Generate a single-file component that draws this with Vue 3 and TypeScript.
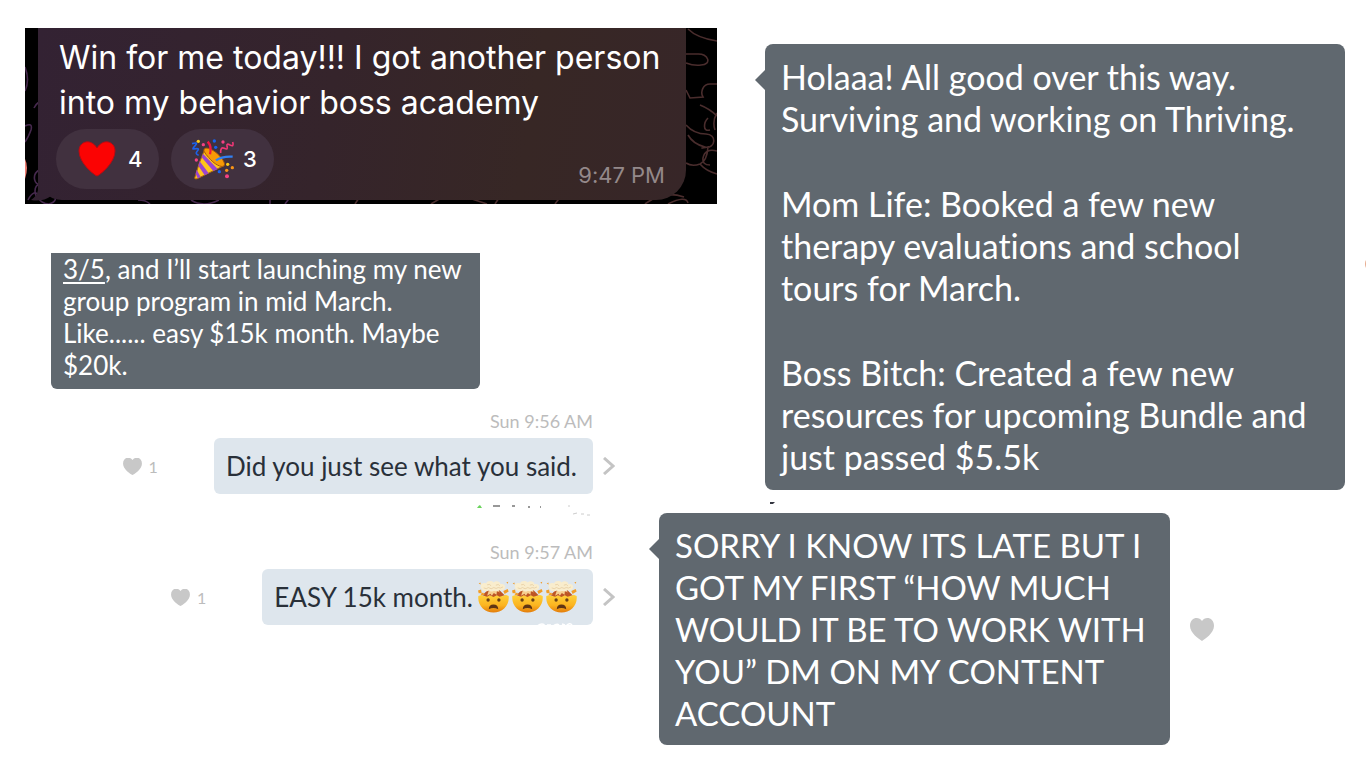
<script setup lang="ts">
interface Reply {
  id: string
  time: string
  text: string
  likes: number
  blown: number
}

const replies: Reply[] = [
  { id: 'first', time: 'Sun 9:56 AM', text: 'Did you just see what you said.', likes: 1, blown: 0 },
  { id: 'second', time: 'Sun 9:57 AM', text: 'EASY 15k month.', likes: 1, blown: 3 },
]

const updates: string[][] = [
  ['Holaaa! All good over this way.', 'Surviving and working on Thriving.'],
  ['Mom Life: Booked a few new', 'therapy evaluations and school', 'tours for March.'],
  ['Boss Bitch: Created a few new', 'resources for upcoming Bundle and', 'just passed $5.5k'],
]

const sorry: string[] = [
  'SORRY I KNOW ITS LATE BUT I',
  'GOT MY FIRST “HOW MUCH',
  'WOULD IT BE TO WORK WITH',
  'YOU” DM ON MY CONTENT',
  'ACCOUNT',
]
</script>

<template>
  <main class="board">
    <section class="win">
      <svg class="doodles" viewBox="0 0 692 176" preserveAspectRatio="none" aria-hidden="true">
        <g fill="none" stroke="#4a2d2d" stroke-width="1.6">
          <path d="M663 1q9 9 29 12M661 26h11c12-1 15 11 4 11q-7 1-15-2M661 62l4 8 13-1c-3-5 0-13 7-13h7M675 77q10 4 17 11M692 85q-5 8-2 17M661 97q8 9 20 9c11 0 10 15-1 13q-12-3-17-12M681 119q-9 2 2 0-1 14-8 17-8 3-14-1M692 123q-12-3-14 7-1 7 7 7M675 136q6 7 17 10M643 176q18-9 20-1" />
          <path d="M683 90c-4 4-6 14 2 12M620 176q18-14 39-7M530 176l9-12M470 176l8-12M406 176l20-12 36 12M330 176l8-12" />
        </g>
        <g fill="none" stroke="#46294e" stroke-width="1.6">
          <path d="M0 39q5 13 0 24M9 80q2-4 5-6M0 98q8-4 6 4-3 8-6 12M14 142c-8 5-4 16 1 14-8 2-5 16 0 14M3 172q6-12 12-4M12 168q4 8 12 8 8-2 6-8M113 172q8 0 12 4M166 172q12 8 28 0M245 176v-5M260 176l6-8" />
        </g>
        <path d="M0 131q4 8 0 20Z" fill="#ed7f74" />
      </svg>
      <svg class="tail" viewBox="0 0 36 32" aria-hidden="true">
        <path d="M9 0v18Q8 24 2 28q12 2 20-4l14 0V0Z" fill="#332232" />
      </svg>
      <div class="win-bubble">
        <p class="win-text">Win for me today!!! I got another person<br />into my behavior boss academy</p>
        <div class="win-foot">
          <button class="reaction" type="button" aria-label="Heart, 4">
            <svg class="red-heart" viewBox="0 0 38 38" aria-hidden="true">
              <path d="M19 36C16 35 1 23 1 11 1 1 13-2 19 8 25-2 37 1 37 11c0 12-15 24-18 25Z" fill="#fb0303" stroke="#b90a12" stroke-width="1" />
            </svg>
            <span>4</span>
          </button>
          <button class="reaction" type="button" aria-label="Party popper, 3">
            <svg class="popper" viewBox="510 350 135 132" aria-hidden="true">
              <path d="M524 473Q537 425 555 385L612 436Q570 456 532 475Q524 478 524 473Z" fill="#ffc51c" stroke="#a96410" stroke-width="3" />
              <path d="M549 400L593 446L580 452L545 411ZM539 423L566 459L554 465L535 436ZM530 448L542 470L533 474L527 460Z" fill="#9a45cf" />
              <path d="M553 386c7-8 29 3 45 20 14 14 19 27 13 31-8 5-26-5-40-20-13-14-23-26-18-31Z" fill="#f79a06" stroke="#a95708" stroke-width="3" />
              <path d="M563 364q13 14 7 38" fill="none" stroke="#ef1744" stroke-width="7" />
              <path d="M588 420q18-13 50-11" fill="none" stroke="#3280f2" stroke-width="7" />
              <path d="M516 370q20-6 10 5t-6 11q22-4 12 6-8 9 4 13" fill="none" stroke="#1d62e9" stroke-width="5" />
              <path d="M602 398q-1-20 11-14 12 6 8-6-2-11 9-4 13 7 8-9" fill="none" stroke="#f03776" stroke-width="5" />
              <g fill="#f44183"><circle cx="550" cy="373" r="5" /><circle cx="529" cy="419" r="5" /><circle cx="609" cy="365" r="5" /><circle cx="621" cy="468" r="6" /></g>
              <g fill="#1763ee"><circle cx="583" cy="362" r="5" /><circle cx="587" cy="381" r="5" /><circle cx="598" cy="454" r="5" /></g>
              <g fill="#ffcd16"><circle cx="535" cy="363" r="5" /><circle cx="623" cy="432" r="5" /></g>
              <g fill="#f99416"><circle cx="637" cy="442" r="5" /><circle cx="620" cy="450" r="5" /></g>
            </svg>
            <span>3</span>
          </button>
          <time class="win-time">9:47 PM</time>
        </div>
      </div>
    </section>

    <section class="thread">
      <div class="launch">
        <a href="#">3/5</a>, and I’ll start launching my new<br />group program in mid March.<br />Like...... easy $15k month. Maybe<br />$20k.
      </div>

      <template v-for="(reply, index) in replies" :key="reply.id">
        <svg v-if="index === 1" class="scraps" viewBox="0 0 120 24" aria-hidden="true">
          <path d="M4 10q2-3 3-3l2 3Z" fill="#6ad35c" />
          <path d="M20 8h7M39 8h3M55 9h2M67 9h1" stroke="#777" stroke-width="1.5" />
          <path d="M95 8h2M100 16l4-1M108 16h3M114 17h3" stroke="#ccc" stroke-width="1" />
        </svg>
        <article class="reply">
          <time class="reply-time">{{ reply.time }}</time>
          <div class="reply-row">
            <button class="like" type="button" aria-label="Like">
              <svg viewBox="0 0 20 18" aria-hidden="true">
                <path d="M10 18C8 17 0 12 0 6 0-1 7-2 10 2c3-4 10-3 10 4C20 12 12 17 10 18Z" fill="#c8c8c8" />
              </svg>
              <span>{{ reply.likes }}</span>
            </button>
            <div class="reply-bubble">
              <span>{{ reply.text }}</span>
              <span v-if="reply.blown" class="blown">
                <svg v-for="n in reply.blown" :key="n" viewBox="0 0 92 94" aria-hidden="true">
                  <defs>
                    <linearGradient id="face" x1="0" y1="0" x2="0" y2="1">
                      <stop offset="0" stop-color="#ffd13a" />
                      <stop offset="0.6" stop-color="#fbb420" />
                      <stop offset="1" stop-color="#e37c0b" />
                    </linearGradient>
                  </defs>
                  <path d="M1 44l9-3 9 4 9-5 18 4 17-4 9 5 10-5 9 4C94 73 72 93 46 93S-2 73 1 44Z" fill="url(#face)" />
                  <path d="M13 42l16-16 16-3 18 3 16 16-15 4-8-4-10 5-11-5-8 4Z" fill="#bd5525" />
                  <path d="M32 28l-5 15 10-6 4 6 6-8 8 5 1-11 9 5-6-10Z" fill="#f6cf91" />
                  <path d="M10 22C3 9 15 3 24 7c3-9 17-9 22-3 9-7 19-2 21 5 12-2 17 7 11 15-7 6-13 1-18 5-6 3-10-2-15 1-7 3-11-3-16-1-8 3-16-1-19-7Z" fill="#f9edcd" />
                  <path d="M17 20q8 5 14-1 8 7 16 0 7 5 13 0 7 4 14-2M27 11q8-4 12 3M53 12q8-5 12 2" fill="none" stroke="#e3c798" stroke-width="2" />
                  <path d="M0 28l9-3 2 10-9 1ZM75 29l13-6 3 8-12 7ZM2 7l5-3 1 6ZM84 4l6-2-2 6ZM7 38l8-4 5 6-9 2Z" fill="#f19d28" />
                  <ellipse cx="30" cy="56" rx="5" ry="5" fill="#694016" />
                  <ellipse cx="62" cy="56" rx="5" ry="5" fill="#694016" />
                  <path d="M32 83q0-14 14-14t14 14q-14-6-28 0Z" fill="#5f3513" />
                </svg>
                <svg class="residue" viewBox="0 0 38 6" aria-hidden="true">
                  <path d="M2 5q6-4 8 0M12 4h4M18 5q4-3 6-1M27 3l3 1M31 5q4-4 6-1" stroke="#fff" stroke-width="1.5" fill="none" />
                </svg>
              </span>
            </div>
            <svg class="chevron" viewBox="0 0 12 18" aria-hidden="true">
              <path d="M1 1l9 8-9 8" fill="none" stroke="#c4c4c4" stroke-width="3" />
            </svg>
          </div>
        </article>
      </template>
    </section>

    <section class="updates">
      <div class="bubble updates-bubble">
        <p v-for="(lines, i) in updates" :key="i">
          <template v-for="line in lines" :key="line">{{ line }}<br /></template>
        </p>
      </div>
      <svg class="speck" viewBox="0 0 6 3" aria-hidden="true"><path d="M0 1h5L3 3H0Z" fill="#343640" /></svg>
    </section>

    <section class="sorry">
      <div class="bubble sorry-bubble">
        <p><template v-for="line in sorry" :key="line">{{ line }}<br /></template></p>
      </div>
      <button class="like like-large" type="button" aria-label="Like">
        <svg viewBox="0 0 24 23" aria-hidden="true">
          <path d="M12 23C9 21 0 15 0 8 0-1 9-2 12 3c3-5 12-4 12 5 0 7-9 13-12 15Z" fill="#c8c8c8" />
        </svg>
      </button>
    </section>
    <span class="edge-dot"></span>
  </main>
</template>

<style>
body {
  margin: 0;
  background: #fff;
}
</style>

<style scoped>
.board {
  position: relative;
  display: grid;
  grid-template-columns: 659fr 106fr 601fr;
  grid-template-rows: 204px auto auto;
  min-height: 100vh;
  box-sizing: border-box;
  align-content: start;
  overflow: hidden;
  font-family: Lato, "Open Sans", sans-serif;
  font-variant-ligatures: none;
}
p {
  margin: 0;
}
button {
  border: 0;
  padding: 0;
  background: none;
  font: inherit;
}
.win {
  grid-area: 1 / 1 / 2 / 3;
  position: relative;
  margin: 28px 48px 0 25px;
  background: #000;
  overflow: hidden;
  font-family: Inter, sans-serif;
}
.doodles {
  position: absolute;
  inset: 0;
  width: 100%;
  height: 100%;
}
.tail {
  position: absolute;
  left: 4px;
  bottom: 0;
  width: 36px;
  height: 32px;
}
.win-bubble {
  position: relative;
  margin: 0 31px 0 13px;
  height: 172px;
  box-sizing: border-box;
  padding: 7px 21px 0;
  border-radius: 0 0 30px 24px;
  background: linear-gradient(100deg, #332233 0%, #35242b 45%, #372725 75%, #372628 100%);
  color: #fff;
}
.win-text {
  font-size: 32px;
  line-height: 45px;
  white-space: nowrap;
}
.win-foot {
  display: flex;
  gap: 12px;
  margin: 4px 0 0 -3px;
}
.reaction {
  display: flex;
  align-items: center;
  gap: 12px;
  width: 103px;
  height: 60px;
  box-sizing: border-box;
  padding-left: 22px;
  border-radius: 30px;
  background: #41313f;
  color: #fff;
  font-size: 22px;
  font-weight: 500;
}
.red-heart {
  width: 38px;
  height: 38px;
}
.popper {
  width: 45px;
  height: 44px;
  margin: 0 -4px 0 -3px;
}
.win-time {
  margin-left: auto;
  padding-top: 32px;
  color: #94898a;
  font-size: 22px;
  line-height: 28px;
}
.thread {
  grid-area: 2 / 1 / 4 / 2;
  padding-top: 49px;
  padding-right: 44px;
}
.launch {
  width: 429px;
  box-sizing: border-box;
  margin-left: 51px;
  padding: 0 0 8px 12px;
  border-radius: 0 0 6px 6px;
  background: #60686f;
  color: #fff;
  font-size: 26px;
  line-height: 32px;
  white-space: nowrap;
}
.launch a {
  color: inherit;
  text-decoration: underline;
  text-decoration-thickness: 2px;
  text-underline-offset: 3px;
}
.reply {
  display: flex;
  flex-direction: column;
}
.launch + .reply {
  margin-top: 21px;
}
.reply-time {
  align-self: flex-end;
  margin-right: 22px;
  color: #bcbcbc;
  font-size: 18px;
  line-height: 22px;
}
.reply-row {
  display: flex;
  justify-content: flex-end;
  align-items: center;
  margin-top: 6px;
}
.like {
  display: flex;
  align-items: center;
  gap: 7px;
  margin-right: 56px;
  color: #bcbcbc;
  font-size: 16px;
}
.like svg {
  width: 19px;
  height: 17px;
}
.reply-bubble {
  display: flex;
  align-items: center;
  gap: 5px;
  height: 56px;
  box-sizing: border-box;
  padding: 0 16px 0 12px;
  border-radius: 6px;
  background: #dee6ed;
  color: #293039;
  font-size: 26px;
  white-space: nowrap;
}
.blown {
  position: relative;
  display: flex;
  gap: 3px;
}
.blown svg {
  width: 31px;
  height: 32px;
}
.blown .residue {
  position: absolute;
  right: 4px;
  bottom: -14px;
  width: 38px;
  height: 6px;
}
.chevron {
  width: 12px;
  height: 18px;
  margin-left: 10px;
}
.scraps {
  display: block;
  width: 120px;
  height: 24px;
  margin: 4px 22px 19px auto;
}
.bubble {
  position: relative;
  box-sizing: border-box;
  border-radius: 8px;
  background: #60686f;
  color: #fff;
  font-size: 33px;
  line-height: 42px;
  white-space: nowrap;
}
.bubble::before {
  content: "";
  position: absolute;
  left: -10px;
  top: 26px;
  border: solid transparent;
  border-width: 10px 10px 10px 0;
  border-right-color: #60686f;
}
.updates {
  grid-area: 1 / 3 / 3 / 4;
  padding: 44px 21px 0 0;
}
.updates-bubble {
  display: flex;
  flex-direction: column;
  gap: 43px;
  padding: 12px 16px;
  font-size: 34px;
}
.speck {
  display: block;
  width: 6px;
  height: 3px;
  margin: 11px 0 9px 5px;
}
.sorry {
  grid-area: 3 / 2 / 4 / 4;
  display: flex;
  align-items: center;
  align-self: start;
}
.sorry-bubble {
  width: 511px;
  padding: 11px 16px;
}
.like-large {
  margin: 0 0 0 20px;
}
.like-large svg {
  width: 24px;
  height: 23px;
}
.edge-dot {
  position: absolute;
  right: -11px;
  top: 257px;
  width: 12px;
  height: 14px;
  border-radius: 50%;
  background: #e7ab8e;
}
</style>
